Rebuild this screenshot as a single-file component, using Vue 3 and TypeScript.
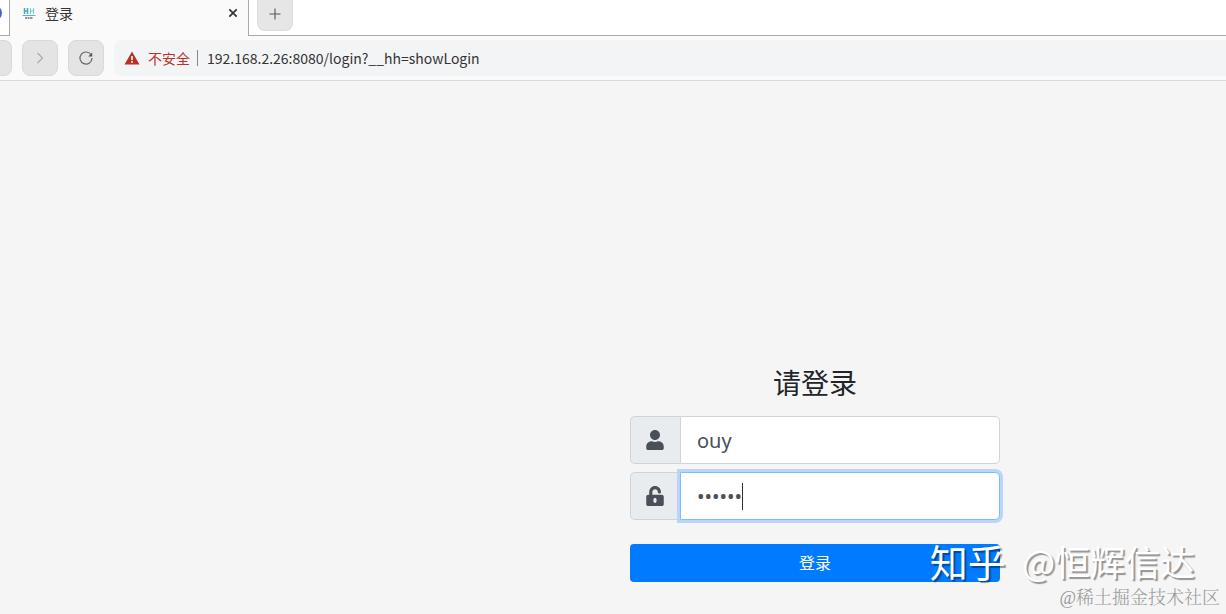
<script setup lang="ts">
import { ref } from 'vue'

const username = ref('ouy')
const password = ref('123456')
const address = ref('192.168.2.26:8080/login?__hh=showLogin')
</script>

<template>
  <div class="page">
    <header class="browser">
      <div class="tabs">
        <div class="tab-previous"><span class="tab-dot"></span></div>
        <div class="tab">
          <svg class="favicon" width="14" height="14" viewBox="0 0 14 14" aria-hidden="true">
            <path d="M2.500 2v6M5.500 2v6M2.500 5h3" stroke="#48a9c4" stroke-width="1.500" fill="none" />
            <path d="M8.500 2v6M11.500 2v6M8.500 5.500l3-1" stroke="#7dcfca" stroke-width="1.100" fill="none" />
            <path d="M.5 9.500h13" stroke="#58b6c5" stroke-width="1" />
            <path d="M3 12h8" stroke="#60798b" stroke-width="1.600" stroke-dasharray="2 .5" />
          </svg>
          <span class="tab-title">登录</span>
          <button class="close" type="button" aria-label="关闭标签页">
            <svg width="10" height="10" viewBox="0 0 10 10"><path d="M1.300 1.300l7.400 7.400M8.700 1.300L1.300 8.700" stroke="#333" stroke-width="1.700" /></svg>
          </button>
        </div>
        <div class="tab-rest">
          <button class="new-tab" type="button" aria-label="新建标签页">
            <svg width="12" height="12" viewBox="0 0 12 12"><path d="M6 .5v11M.5 6h11" stroke="#555" stroke-width="1.100" /></svg>
          </button>
        </div>
      </div>
      <div class="toolbar">
        <button class="tool back" type="button" aria-label="后退"></button>
        <button class="tool" type="button" aria-label="前进">
          <svg width="16" height="16" viewBox="0 0 16 16"><path d="M5.500 3l5 5-5 5" fill="none" stroke="#aaa" stroke-width="1.200" /></svg>
        </button>
        <button class="tool" type="button" aria-label="刷新">
          <svg width="16" height="16" viewBox="0 0 16 16"><path d="M13.200 5A6 6 0 1 0 14 8" fill="none" stroke="#666" stroke-width="1.200" /><path d="M14.200 2.500v4h-4z" fill="#555" /></svg>
        </button>
        <div class="address">
          <svg class="warning" width="16" height="14" viewBox="0 0 16 14" aria-hidden="true"><path d="M8 .5L15.500 13.500H.5z" fill="#b93228" /><path d="M8 5v4M8 10v1.800" stroke="#fff" stroke-width="1.600" /></svg>
          <span class="unsafe">不安全</span>
          <span class="divider"></span>
          <input v-model="address" class="url" type="text" aria-label="地址" />
        </div>
      </div>
    </header>

    <main class="content">
      <form class="login" @submit.prevent>
        <h1>请登录</h1>
        <div class="group">
          <label class="addon" for="username" aria-label="用户名">
            <svg width="18" height="20" viewBox="0 0 448 512"><path fill="#495057" d="M224 256c70.700 0 128-57.300 128-128S294.700 0 224 0 96 57.300 96 128s57.300 128 128 128zm89.600 32h-16.700c-22.200 10.200-46.900 16-72.900 16s-50.600-5.800-72.900-16h-16.700C60.200 288 0 348.200 0 422.400V464c0 26.500 21.500 48 48 48h352c26.500 0 48-21.500 48-48v-41.600c0-74.200-60.200-134.400-134.400-134.400z" /></svg>
          </label>
          <input id="username" v-model="username" class="field" type="text" autocomplete="off" />
        </div>
        <div class="group">
          <label class="addon" for="password" aria-label="密码">
            <svg width="18" height="20" viewBox="0 0 448 512"><path fill="#495057" fill-rule="evenodd" d="M400 224H156v-73c0-39 31-71 70-71s70 31 70 70v18c0 13 11 24 24 24h32c13 0 24-11 24-24v-16C376 68 308 0 224 0S76 70 76 154v70H48c-26 0-48 22-48 48v192c0 27 22 48 48 48h352c27 0 48-21 48-48V272c0-26-21-48-48-48zM264 392c0 22-18 40-40 40s-40-18-40-40v-48c0-22 18-40 40-40s40 18 40 40z" /></svg>
          </label>
          <input id="password" v-model="password" class="field active" type="password" autocomplete="off" />
          <span class="caret"></span>
        </div>
        <button class="submit" type="submit">登录</button>
      </form>
    </main>

    <div class="marks">
      <div class="mark-large"><span class="brand">知乎</span><span>@恒辉信达</span></div>
      <div class="mark-small">@稀土掘金技术社区</div>
    </div>
  </div>
</template>

<style>
body {
  background: #f5f5f5;
}
</style>

<style scoped>
* {
  box-sizing: border-box;
}
.page {
  position: relative;
  min-height: 100vh;
  overflow: hidden;
  background: #f5f5f5;
  color: #212529;
  font-family: "Noto Sans", "Noto Sans CJK SC", sans-serif;
}
button,
input {
  font-family: inherit;
  margin: 0;
}
svg {
  display: block;
  flex: none;
}
.browser {
  background: #fafafa;
  border-bottom: 1px solid #d9d9d9;
  font-family: "Noto Sans CJK SC", sans-serif;
}
.tabs {
  display: flex;
  height: 36px;
}
.tab-previous {
  width: 10px;
  background: #fff;
  border-right: 1px solid #aaa;
  border-bottom: 1px solid #aaa;
  overflow: hidden;
}
.tab-dot {
  display: block;
  width: 16px;
  height: 16px;
  margin: 5px 0 0 -14px;
  border-radius: 50%;
  background: #4263d8;
}
.tab {
  display: flex;
  align-items: center;
  width: 238px;
  padding: 0 10px 10px 12px;
}
.tab-title {
  flex: 1;
  margin-left: 9px;
  font-size: 14px;
  line-height: 20px;
  color: #333;
}
.close {
  padding: 0;
  border: 0;
  background: none;
}
.tab-rest {
  flex: 1;
  padding-left: 8px;
  background: #fff;
  border-left: 1px solid #aaa;
  border-bottom: 1px solid #aaa;
}
.new-tab {
  display: flex;
  align-items: center;
  justify-content: center;
  width: 36px;
  height: 31px;
  padding: 0 0 3px;
  border: 1px solid #dcdcdc;
  border-top: 0;
  border-radius: 0 0 8px 8px;
  background: #e6e6e6;
}
.toolbar {
  display: flex;
  align-items: center;
  gap: 10px;
  height: 44px;
}
.tool {
  display: flex;
  align-items: center;
  justify-content: center;
  flex: none;
  width: 36px;
  height: 36px;
  padding: 0;
  border: 1px solid #d9d9d9;
  border-radius: 8px;
  background: #e4e4e4;
}
.back {
  width: 12px;
  border-left: 0;
  border-radius: 0 8px 8px 0;
}
.address {
  display: flex;
  align-items: center;
  flex: 1;
  height: 36px;
  padding-left: 10px;
  border-radius: 8px 0 0 8px;
  background: #f3f4f5;
}
.unsafe {
  margin: 0 7px 0 8px;
  font-size: 14px;
  line-height: 16px;
  color: #b93228;
}
.divider {
  width: 1px;
  height: 16px;
  background: #888;
}
.url {
  flex: 1;
  min-width: 0;
  height: 28px;
  padding: 0 0 0 9px;
  border: 0;
  outline: 0;
  background: transparent;
  color: #333;
  font-size: 14px;
}
.content {
  display: flex;
  justify-content: center;
  padding: 282px 0 32px 404px;
}
.login {
  width: 370px;
}
h1 {
  margin: 0 0 13px;
  font-size: 28px;
  line-height: 40px;
  font-weight: 400;
  text-align: center;
}
.group {
  position: relative;
  display: flex;
  height: 48px;
  margin-bottom: 8px;
}
.addon {
  display: flex;
  align-items: center;
  justify-content: center;
  width: 50px;
  padding-right: 1px;
  border: 1px solid #ced4da;
  border-right: 0;
  border-radius: 5px 0 0 5px;
  background: #e9ecef;
}
.field {
  flex: 1;
  min-width: 0;
  padding: 9px 16px 7px;
  border: 1px solid #ced4da;
  border-radius: 0 5px 5px 0;
  outline: 0;
  background: #fff;
  color: #495057;
  font-size: 20px;
  line-height: 30px;
}
.active {
  border-color: #80bdff;
  box-shadow: 0 0 0 3px #b9d6f8;
}
.caret {
  position: absolute;
  top: 11px;
  left: 112px;
  width: 1px;
  height: 27px;
  background: #333;
}
.submit {
  display: block;
  width: 100%;
  height: 38px;
  margin-top: 24px;
  padding: 0;
  border: 0;
  border-radius: 4px;
  background: #007bff;
  color: #fff;
  font-size: 16px;
  line-height: 24px;
}
.marks {
  position: absolute;
  right: 6px;
  bottom: 4px;
  font-family: "Noto Sans CJK SC", sans-serif;
  text-align: right;
  pointer-events: none;
}
.mark-large {
  display: flex;
  align-items: center;
  justify-content: flex-end;
  gap: 16px;
  margin-right: 25px;
  padding-bottom: 2px;
  color: #fff;
  font-size: 35px;
  line-height: 46px;
  text-shadow: 2px 2px 1px rgba(0, 0, 0, 0.4);
}
.brand {
  font-size: 38px;
  font-weight: 400;
}
.mark-small {
  color: #999;
  font-family: "Liberation Serif", "Noto Serif CJK SC", "Noto Sans CJK SC", serif;
  font-size: 18px;
  font-weight: 300;
  line-height: 24px;
}
</style>
